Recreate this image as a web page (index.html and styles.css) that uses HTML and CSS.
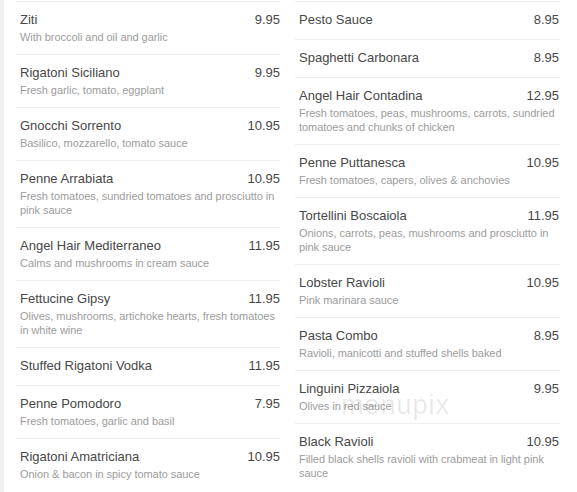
FILE: index.html
```html
<!DOCTYPE html>
<html>
<head>
<meta charset="utf-8">
<link rel="stylesheet" href="styles.css">
</head>
<body>
<div class="page">
  <div class="menu">
    <div class="column">
      <div class="item"><div class="row"><span class="name">Ziti</span><span class="price">9.95</span></div><div class="desc">With broccoli and oil and garlic</div></div>
      <div class="item"><div class="row"><span class="name">Rigatoni Siciliano</span><span class="price">9.95</span></div><div class="desc">Fresh garlic, tomato, eggplant</div></div>
      <div class="item"><div class="row"><span class="name">Gnocchi Sorrento</span><span class="price">10.95</span></div><div class="desc">Basilico, mozzarello, tomato sauce</div></div>
      <div class="item"><div class="row"><span class="name">Penne Arrabiata</span><span class="price">10.95</span></div><div class="desc">Fresh tomatoes, sundried tomatoes and prosciutto in pink sauce</div></div>
      <div class="item"><div class="row"><span class="name">Angel Hair Mediterraneo</span><span class="price">11.95</span></div><div class="desc">Calms and mushrooms in cream sauce</div></div>
      <div class="item"><div class="row"><span class="name">Fettucine Gipsy</span><span class="price">11.95</span></div><div class="desc">Olives, mushrooms, artichoke hearts, fresh tomatoes in white wine</div></div>
      <div class="item"><div class="row"><span class="name">Stuffed Rigatoni Vodka</span><span class="price">11.95</span></div></div>
      <div class="item"><div class="row"><span class="name">Penne Pomodoro</span><span class="price">7.95</span></div><div class="desc">Fresh tomatoes, garlic and basil</div></div>
      <div class="item"><div class="row"><span class="name">Rigatoni Amatriciana</span><span class="price">10.95</span></div><div class="desc">Onion &amp; bacon in spicy tomato sauce</div></div>
    </div>
    <div class="column column-right">
      <div class="item"><div class="row"><span class="name">Pesto Sauce</span><span class="price">8.95</span></div></div>
      <div class="item"><div class="row"><span class="name">Spaghetti Carbonara</span><span class="price">8.95</span></div></div>
      <div class="item"><div class="row"><span class="name">Angel Hair Contadina</span><span class="price">12.95</span></div><div class="desc">Fresh tomatoes, peas, mushrooms, carrots, sundried tomatoes and chunks of chicken</div></div>
      <div class="item"><div class="row"><span class="name">Penne Puttanesca</span><span class="price">10.95</span></div><div class="desc">Fresh tomatoes, capers, olives &amp; anchovies</div></div>
      <div class="item"><div class="row"><span class="name">Tortellini Boscaiola</span><span class="price">11.95</span></div><div class="desc">Onions, carrots, peas, mushrooms and prosciutto in pink sauce</div></div>
      <div class="item"><div class="row"><span class="name">Lobster Ravioli</span><span class="price">10.95</span></div><div class="desc">Pink marinara sauce</div></div>
      <div class="item"><div class="row"><span class="name">Pasta Combo</span><span class="price">8.95</span></div><div class="desc">Ravioli, manicotti and stuffed shells baked</div></div>
      <div class="item item-watermarked"><div class="row"><span class="name">Linguini Pizzaiola</span><span class="price">9.95</span></div><div class="desc">Olives in red sauce</div><span class="watermark">menupix</span></div>
      <div class="item"><div class="row"><span class="name">Black Ravioli</span><span class="price">10.95</span></div><div class="desc">Filled black shells ravioli with crabmeat in light pink sauce</div></div>
    </div>
  </div>
</div>
</body>
</html>
```
FILE: styles.css
```css
html, body {
  margin: 0;
  padding: 0;
  background: #ffffff;
}

body {
  font-family: "Liberation Sans", Arial, sans-serif;
  height: 492px;
  overflow: hidden;
}

.page {
  border-left: 4px solid #f1f1f1;
  padding: 1px 0 0 12px;
  min-height: 492px;
  box-sizing: border-box;
}

.menu {
  display: grid;
  grid-template-columns: 264px 265px;
  column-gap: 15px;
  align-items: start;
}

.column {
  display: flex;
  flex-direction: column;
}

.item {
  border-top: 1px solid #ededed;
  padding: 9px 0 10px 4px;
}

.column-right .item {
  padding-right: 1px;
}

.row {
  display: flex;
  justify-content: space-between;
  align-items: baseline;
  font-size: 13px;
  line-height: 18px;
  color: #474747;
}

.desc {
  margin-top: 1px;
  font-size: 11px;
  line-height: 14px;
  letter-spacing: -0.05px;
  color: #9c9c9c;
}

.item-watermarked {
  position: relative;
}

.watermark {
  position: absolute;
  left: 46px;
  top: 19px;
  font-size: 27px;
  line-height: 30px;
  letter-spacing: 1px;
  color: rgba(0, 0, 0, 0.09);
  pointer-events: none;
}
```
